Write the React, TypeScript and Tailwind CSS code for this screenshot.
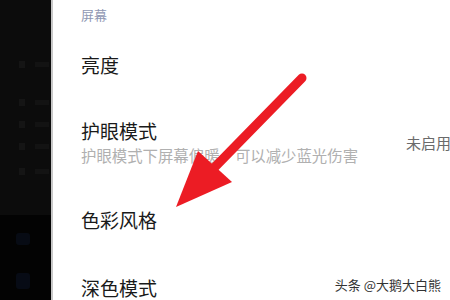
const sideRows = [65, 103, 125, 147, 172];

function Arrow() {
  return (
    <svg
      className="absolute left-0 top-0 pointer-events-none"
      width="450"
      height="300"
      viewBox="0 0 450 300"
    >
      <line
        x1="302"
        y1="78"
        x2="212"
        y2="170"
        stroke="#ec1c24"
        strokeWidth="9"
        strokeLinecap="round"
      />
      <polygon points="176,207 198,151 232,182" fill="#ec1c24" />
    </svg>
  );
}

export default function App() {
  return (
    <div
      className="relative w-[450px] h-[300px] overflow-hidden flex bg-white"
      style={{ fontFamily: '"Noto Sans CJK SC", "Noto Sans", sans-serif' }}
    >
      {/* left dark strip */}
      <div className="w-[53px] h-full shrink-0 flex flex-col border-r-[2px] border-[#c8c8c8] overflow-hidden">
        <div className="relative h-[215px] bg-[#0c0c0c]">
          {sideRows.map((y) => (
            <div key={y} className="absolute left-[19px] flex items-center gap-[10px]" style={{ top: y - 4 }}>
              <div className="w-[6px] h-[7px] bg-[#151515]" />
              <div className="w-[14px] h-[5px] bg-[#131313]" />
            </div>
          ))}
        </div>
        <div className="flex-1 bg-[#030303] flex flex-col items-center pt-[18px] gap-[28px] pr-[6px]">
          <div className="w-[14px] h-[12px] rounded-[3px] bg-[#070b14]" />
          <div className="w-[14px] h-[16px] rounded-[3px] bg-[#070b15]" />
        </div>
      </div>

      {/* settings list */}
      <div className="flex-1 flex flex-col pl-[28px] text-[#1a1a1a]">
        <div className="h-[32px] flex items-center text-[13px] text-[#8f97b3]">屏幕</div>
        <div className="h-[75px] flex items-center text-[19px]">亮度</div>
        <div className="h-[74px] flex items-center justify-between pt-[12px]">
          <div className="flex flex-col gap-[2px]">
            <div className="text-[19px] leading-[24px]">护眼模式</div>
            <div className="text-[15.4px] leading-[20px] text-[#b0b0b0]">
              护眼模式下屏幕偏暖，可以减少蓝光伤害
            </div>
          </div>
          <div className="text-[15px] text-[#6a6a6a] mr-[-1px] pt-[1px]">未启用</div>
        </div>
        <div className="h-[84px] flex items-center text-[19px] pt-[16px]">色彩风格</div>
        <div className="h-[48px] flex items-center text-[19px] pt-[24px]">深色模式</div>
      </div>

      <Arrow />

      <div className="absolute right-[9px] bottom-[6px] text-[13px] text-[#333] [text-shadow:0_0_2px_#fff]">
        头条 @大鹅大白熊
      </div>
    </div>
  );
}
